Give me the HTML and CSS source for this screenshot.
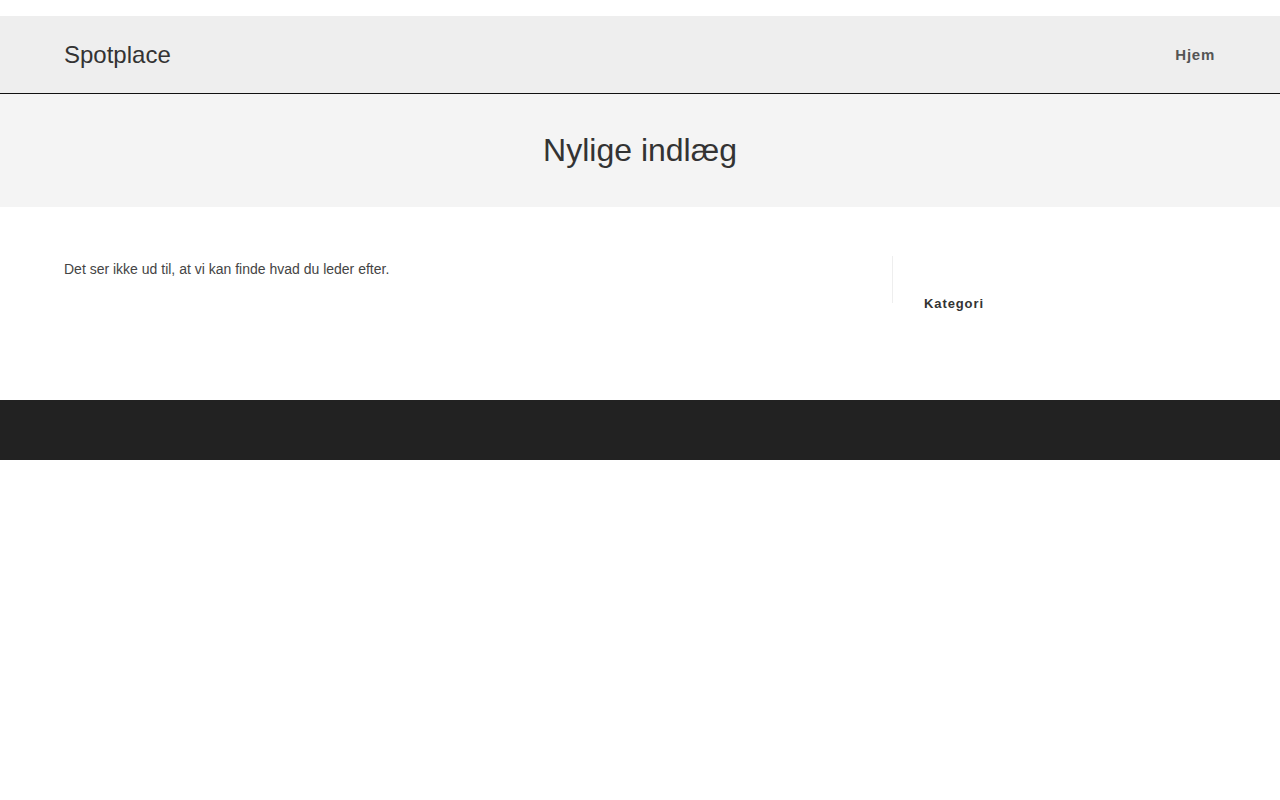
FILE: index.html
```html
<!DOCTYPE html>
<html lang="da">
<head>
<meta charset="utf-8">
<title>Nylige indlæg – Spotplace</title>
<link rel="stylesheet" href="styles.css">
</head>
<body>
<div class="page">
  <header class="site-header">
    <a class="brand" href="#">Spotplace</a>
    <nav class="nav"><a href="#">Hjem</a></nav>
  </header>
  <section class="page-title">
    <h1>Nylige indlæg</h1>
  </section>
  <main class="content">
    <div class="primary">
      <p>Det ser ikke ud til, at vi kan finde hvad du leder efter.</p>
    </div>
    <aside class="sidebar">
      <h4 class="widget-title">Kategori</h4>
    </aside>
  </main>
  <footer class="site-footer"></footer>
</div>
</body>
</html>
```
FILE: styles.css
```css
* { box-sizing: border-box; }
html, body { margin: 0; padding: 0; background: #fff; }
body { font-family: "Liberation Sans", Arial, sans-serif; color: #333; }
.page { padding-top: 16px; }
.site-header {
  background: #eeeeee;
  height: 78px;
  border-bottom: 1px solid #111;
  display: flex;
  align-items: center;
  justify-content: space-between;
  padding: 0 65px 0 64px;
}
.brand {
  font-size: 24px;
  color: #333;
  text-decoration: none;
  line-height: 1;
  margin-top: 1px;
}
.nav a {
  font-size: 15px;
  font-weight: bold;
  letter-spacing: 0.75px;
  color: #555;
  text-decoration: none;
}
.page-title {
  background: #f4f4f4;
  height: 113px;
  display: flex;
  align-items: center;
  justify-content: center;
}
.page-title h1 {
  margin: 0;
  font-size: 32px;
  font-weight: normal;
  color: #333;
  line-height: 1;
  margin-top: -1px;
}
.content {
  display: flex;
  padding: 49px 0 0 64px;
  height: 193px;
}
.primary { width: 828px; }
.primary p {
  margin: 5px 0 0;
  font-size: 14px;
  line-height: 16px;
  color: #444;
}
.sidebar {
  border-left: 1px solid #eee;
  height: 47px;
  padding-left: 31px;
}
.widget-title {
  margin: 40px 0 0;
  font-size: 13px;
  font-weight: bold;
  letter-spacing: 0.9px;
  color: #333;
  line-height: 15px;
  white-space: nowrap;
}
.site-footer {
  background: #222;
  height: 60px;
}
```
